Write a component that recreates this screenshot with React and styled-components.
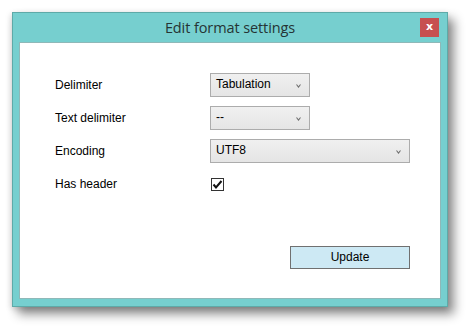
import React from "react";
import styled, { createGlobalStyle } from "styled-components";

const Global = createGlobalStyle`
  html, body { margin: 0; padding: 0; background: #ffffff; }
  body { font-family: "Liberation Sans", Arial, sans-serif; }
`;

const Page = styled.div`
  width: 468px;
  height: 327px;
  padding: 12px 0 0 12px;
  box-sizing: border-box;
  background: #ffffff;
  overflow: hidden;
`;

const Window = styled.div`
  width: 436px;
  height: 295px;
  box-sizing: border-box;
  background: #76cfcf;
  border: 1px solid #5eaaa8;
  box-shadow: 6px 7px 10px rgba(0, 0, 0, 0.45), -1px 2px 6px rgba(0, 0, 0, 0.15);
  display: flex;
  flex-direction: column;
  padding: 0 6px 7px 6px;
`;

const TitleBar = styled.div`
  height: 29px;
  display: grid;
  grid-template-columns: 1fr auto 1fr;
  align-items: center;
`;

const Title = styled.div`
  grid-column: 2;
  font-family: "Open Sans", "Noto Sans", sans-serif;
  font-size: 14.5px;
  color: #253434;
  letter-spacing: -0.1px;
  padding-top: 0px;
`;

const CloseButton = styled.div`
  grid-column: 3;
  justify-self: end;
  align-self: start;
  margin-top: 5px;
  margin-right: 2px;
  width: 19px;
  height: 19px;
  background: #c75050;
  color: #ffffff;
  font-family: "DejaVu Sans", sans-serif;
  font-weight: bold;
  font-size: 11px;
  line-height: 18px;
  text-align: center;
`;

const Content = styled.div`
  flex: 1;
  background: #ffffff;
  border: 1px solid #8fb8b8;
  padding: 30px 0 0 35px;
  display: grid;
  grid-template-columns: 155px 200px;
  grid-auto-rows: 24px;
  row-gap: 9px;
  align-content: start;
`;

const Label = styled.div`
  font-size: 12px;
  color: #000000;
  align-self: center;
`;

const Combo = styled.div`
  width: ${(p) => p.$w}px;
  height: 24px;
  box-sizing: border-box;
  border: 1px solid #acacac;
  background: linear-gradient(#f0f0f0, #e5e5e5);
  display: flex;
  align-items: center;
  justify-content: space-between;
  padding: 0 8px 2px 5px;
  font-size: 12px;
  color: #000000;
`;

const Chevron = styled.svg`
  width: 5px;
  height: 4px;
  margin-top: 3px;
`;

const CheckBox = styled.div`
  width: 13px;
  height: 13px;
  box-sizing: border-box;
  border: 1px solid #333333;
  background: #ffffff;
  align-self: center;
  margin-left: 1px;
  margin-top: 1px;
  display: flex;
  align-items: center;
  justify-content: center;
`;

const UpdateButton = styled.div`
  grid-column: 2;
  justify-self: end;
  margin-top: 41px;
  width: 120px;
  height: 23px;
  box-sizing: border-box;
  border: 1px solid #707070;
  background: #cde9f4;
  font-size: 12px;
  color: #000000;
  display: flex;
  align-items: center;
  justify-content: center;
  padding-bottom: 1px;
`;

function Arrow() {
  return (
    <Chevron viewBox="0 0 5 4">
      <polyline points="0.5,0.5 2.5,3 4.5,0.5" fill="none" stroke="#6d6d6d" strokeWidth="1.1" />
    </Chevron>
  );
}

function Select({ value, width }) {
  return (
    <Combo $w={width}>
      <span>{value}</span>
      <Arrow />
    </Combo>
  );
}

export default function App() {
  return (
    <Page>
      <Global />
      <Window>
        <TitleBar>
          <Title>Edit format settings</Title>
          <CloseButton>x</CloseButton>
        </TitleBar>
        <Content>
          <Label>Delimiter</Label>
          <Select value="Tabulation" width={100} />
          <Label>Text delimiter</Label>
          <Select value="--" width={100} />
          <Label>Encoding</Label>
          <Select value="UTF8" width={200} />
          <Label>Has header</Label>
          <CheckBox>
            <svg width="11" height="11" viewBox="0 0 11 11">
              <polyline points="1.5,5.5 4,8.5 9.5,2" fill="none" stroke="#111" strokeWidth="2" />
            </svg>
          </CheckBox>
          <UpdateButton>Update</UpdateButton>
        </Content>
      </Window>
    </Page>
  );
}
